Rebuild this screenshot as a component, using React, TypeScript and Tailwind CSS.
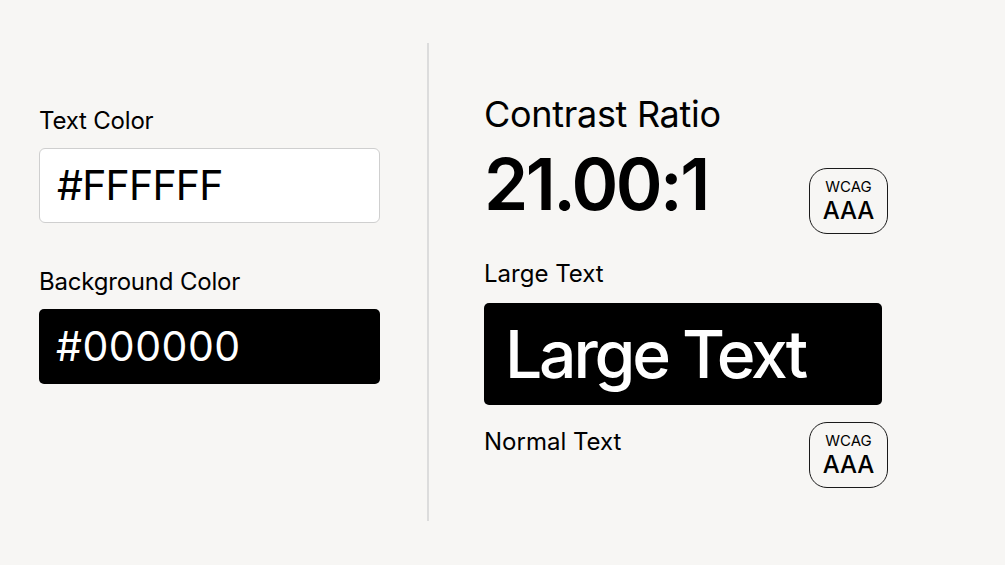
export default function App() {
  return (
    <div className="flex h-[565px] w-full items-start bg-[#f7f6f4] text-black [font-family:Inter,'Noto_Sans',sans-serif]">
      {/* colour inputs */}
      <div className="ml-[39px] mt-[105px] flex w-[341px] flex-col">
        <label className="text-[24px] leading-[32px] tracking-[-0.2px]">Text Color</label>
        <div className="mt-[11px] flex h-[75px] items-center rounded-[6px] border border-[#cfcfcf] bg-white pl-[17px] text-[41px] tracking-[-0.8px]">
          #FFFFFF
        </div>
        <label className="mt-[43px] text-[24px] leading-[32px] tracking-[-0.2px]">Background Color</label>
        <div className="mt-[11px] flex h-[75px] items-center rounded-[5px] bg-black pl-[17px] text-[41px] text-white tracking-[0.5px]">
          #000000
        </div>
      </div>

      <div className="ml-[47px] mt-[43px] h-[478px] w-[2px] bg-[#dcdcdc]" />

      {/* results */}
      <div className="ml-[55px] mt-[93px] flex w-[404px] flex-col">
        <h2 className="text-[36px] leading-[42px] tracking-[-0.3px]">Contrast Ratio</h2>
        <div className="mt-[13px] flex items-start justify-between">
          <span className="text-[71px] font-semibold leading-[72px] tracking-[-2.5px]">21.00:1</span>
          <Badge className="mt-[20px]" />
        </div>
        <label className="mt-[24px] text-[24px] leading-[32px]">Large Text</label>
        <div className="mt-[13px] flex h-[102px] w-[398px] items-center rounded-[5px] bg-black pl-[21px] text-[66px] font-medium tracking-[-3.2px] text-white">
          Large Text
        </div>
        <div className="mt-[17px] flex items-start justify-between">
          <label className="mt-[4px] text-[24px] leading-[32px]">Normal Text</label>
          <Badge />
        </div>
      </div>
    </div>
  );
}

function Badge({ className = '' }: { className?: string }) {
  return (
    <div
      className={`flex h-[66px] w-[79px] flex-col items-center justify-center rounded-[18px] border-[1.5px] border-[#1a1a1a] ${className}`}
    >
      <span className="text-[15px] leading-[17px]">WCAG</span>
      <span className="mt-[2px] text-[24px] font-medium leading-[27px]">AAA</span>
    </div>
  );
}
